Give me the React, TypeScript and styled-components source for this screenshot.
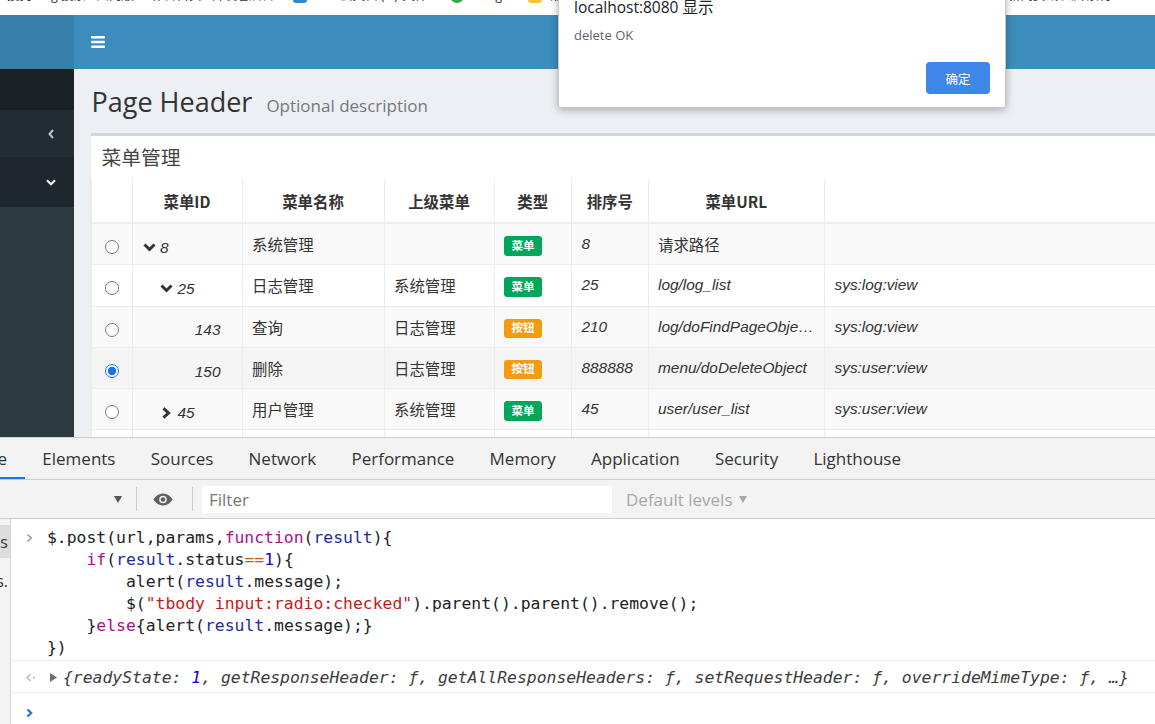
import React from "react";
import styled, { createGlobalStyle } from "styled-components";

const SANS = `"Open Sans", "Noto Sans CJK SC", sans-serif`;
const CJK = `"Noto Sans CJK SC", "Open Sans", sans-serif`;
const ARIAL = `"Liberation Sans", "Noto Sans CJK SC", sans-serif`;
const MONO = `"DejaVu Sans Mono", "Liberation Mono", monospace`;

const GlobalStyle = createGlobalStyle`
  html, body { margin: 0; padding: 0; background: #fff; }
  body { font-family: ${SANS}; }
  *, *::before, *::after { box-sizing: border-box; }
`;

const Screen = styled.div`
  position: relative;
  width: 1155px;
  height: 724px;
  overflow: hidden;
  display: flex;
  flex-direction: column;
  background: #fff;
`;

/* ---------- bookmarks bar ---------- */
const BookmarkBar = styled.div`
  flex: none;
  height: 15px;
  overflow: hidden;
  background: #fff;
  display: flex;
  align-items: flex-end;
  padding: 0 0 11px 7px;
  font: 12.5px/16px ${SANS};
  color: #333;
`;
const Bookmark = styled.div<{ $w: number }>`
  flex: none;
  width: ${(p) => p.$w}px;
  display: flex;
  align-items: center;
  gap: 7px;
  white-space: nowrap;
  overflow: hidden;
`;
const BookmarkIcon = styled.span<{ $c: string; $round?: boolean }>`
  flex: none;
  width: 14px;
  height: 14px;
  border-radius: ${(p) => (p.$round ? "50%" : "3px")};
  background: ${(p) => p.$c};
`;

/* ---------- page ---------- */
const BrowserPage = styled.div`
  flex: none;
  height: 422px;
  display: flex;
  flex-direction: column;
  overflow: hidden;
`;
const MainHeader = styled.header`
  flex: none;
  height: 54px;
  display: flex;
`;
const Logo = styled.div`
  flex: none;
  width: 74px;
  background: #367fa9;
`;
const Navbar = styled.nav`
  flex: 1;
  background: #3c8dbc;
  display: flex;
  align-items: center;
  padding-left: 17px;
`;
const ToggleButton = styled.span`
  display: flex;
  width: 14px;
  height: 12px;
  color: #fff;
`;

const Wrapper = styled.div`
  flex: 1;
  min-height: 0;
  display: flex;
`;
const Sidebar = styled.aside`
  flex: none;
  width: 74px;
  display: flex;
  flex-direction: column;
  background: #2c3b41;
`;
const SidebarHeader = styled.div`
  flex: none;
  height: 41px;
  background: #1a2226;
`;
const SidebarItem = styled.div<{ $active?: boolean; $h: number }>`
  flex: none;
  height: ${(p) => p.$h}px;
  background: ${(p) => (p.$active ? "#1e282c" : "#222d32")};
  color: ${(p) => (p.$active ? "#e8eef1" : "#b8c7ce")};
  display: flex;
  align-items: center;
  justify-content: flex-end;
  padding-right: 18px;
`;
const AngleBox = styled.span`
  display: flex;
  width: 10px;
  justify-content: center;
`;

const Content = styled.main`
  flex: 1;
  min-width: 0;
  background: #ecf0f5;
  overflow: hidden;
  display: flex;
  flex-direction: column;
`;
const ContentHeader = styled.section`
  flex: none;
  padding: 17.6px 16.5px 0 17.5px;
`;
const PageTitle = styled.h1`
  margin: 0;
  font-family: ${SANS};
  font-size: 27px;
  line-height: 29.7px;
  font-weight: 400;
  color: #333;
  white-space: nowrap;
`;
const PageDesc = styled.small`
  font-size: 17px;
  line-height: 1;
  color: #777;
  padding-left: 7px;
`;

const Box = styled.section`
  flex: none;
  margin: 16.7px 0 0 16.5px;
  width: 1534px;
  background: #fff;
  border-top: 3px solid #d2d6de;
  box-shadow: 0 1px 1px rgba(0, 0, 0, 0.1);
`;
const BoxHeader = styled.div`
  padding: 10px 11px 11px;
`;
const BoxTitle = styled.h3`
  margin: 0;
  font-family: ${CJK};
  font-size: 19.8px;
  line-height: 22px;
  font-weight: 400;
  color: #444;
`;

const Table = styled.table`
  width: 100%;
  border-collapse: collapse;
  table-layout: fixed;
  font-family: ${SANS};
  font-size: 15.4px;
  color: #333;
`;
const Col = styled.col<{ $w: number }>`
  width: ${(p) => p.$w}px;
`;
const Th = styled.th`
  height: 44.5px;
  padding: 0 9.5px;
  line-height: 20px;
  text-align: center;
  font-weight: 700;
  font-family: ${CJK};
  border: 1px solid #ededed;
  border-top: none;
  border-bottom: 2px solid #ededed;
  white-space: nowrap;
  overflow: hidden;
`;
const Tr = styled.tr<{ $bg: string }>`
  background: ${(p) => p.$bg};
`;
const Td = styled.td<{ $italic?: boolean; $center?: boolean }>`
  height: 41.3px;
  padding: 0 9.5px;
  border: 1px solid #ededed;
  line-height: 20px;
  vertical-align: middle;
  white-space: nowrap;
  overflow: hidden;
  text-overflow: ellipsis;
  text-align: ${(p) => (p.$center ? "center" : "left")};
  font-family: ${(p) => (p.$italic ? ARIAL : CJK)};
  font-style: ${(p) => (p.$italic ? "italic" : "normal")};
`;
const Radio = styled.input`
  width: 14px;
  height: 14px;
  margin: 0;
  vertical-align: middle;
  accent-color: #1a73e8;
`;
const TreeCell = styled.span`
  display: inline-flex;
  align-items: center;
  font-family: ${ARIAL};
  font-style: italic;
`;
const Indent = styled.span<{ $level: number }>`
  display: inline-block;
  width: ${(p) => p.$level * 17.4}px;
`;
const Expander = styled.span`
  display: inline-flex;
  justify-content: center;
  align-items: center;
  width: 14px;
  margin-right: 4px;
  color: #333;
`;
const Badge = styled.span<{ $kind: "menu" | "button" }>`
  display: inline-block;
  padding: 3.5px 7.5px 4.4px;
  font-family: ${CJK};
  font-size: 11.5px;
  line-height: 1;
  font-weight: 700;
  color: #fff;
  border-radius: 3.3px;
  background: ${(p) => (p.$kind === "menu" ? "#00a65a" : "#f39c12")};
  vertical-align: middle;
`;

/* ---------- alert dialog ---------- */
const AlertDialog = styled.div`
  position: absolute;
  left: 558px;
  top: -14px;
  width: 448px;
  height: 122px;
  z-index: 10;
  background: #fff;
  border: 1px solid #c9c9c9;
  border-radius: 0 0 3px 3px;
  box-shadow: 0 2px 8px rgba(0, 0, 0, 0.3);
  padding: 10px 15px 0 15px;
  display: flex;
  flex-direction: column;
`;
const AlertTitle = styled.div`
  font-family: ${SANS};
  font-size: 15.5px;
  line-height: 20px;
  color: #202124;
`;
const AlertMessage = styled.div`
  margin-top: 10px;
  font-family: ${SANS};
  font-size: 13px;
  line-height: 16px;
  color: #5f6368;
`;
const AlertActions = styled.div`
  margin-top: 19px;
  display: flex;
  justify-content: flex-end;
`;
const AlertButton = styled.button`
  width: 64px;
  height: 32px;
  border: none;
  border-radius: 4px;
  background: #3f86e9;
  color: #fff;
  font-family: ${CJK};
  font-size: 12.5px;
  padding: 0;
`;

/* ---------- devtools ---------- */
const DevTools = styled.div`
  flex: 1;
  min-height: 0;
  display: flex;
  flex-direction: column;
  border-top: 1px solid #cbcdd1;
  background: #fff;
`;
const TabBar = styled.div`
  flex: none;
  height: 42px;
  display: flex;
  background: #f3f3f3;
  border-bottom: 1px solid #cbcdd1;
  margin-left: -74px;
`;
const Tab = styled.div<{ $active?: boolean }>`
  display: flex;
  align-items: center;
  padding: 2px 17.6px 0;
  font-family: ${SANS};
  font-size: 17px;
  color: #333;
  white-space: nowrap;
  border-bottom: 2px solid ${(p) => (p.$active ? "#1a73e8" : "transparent")};
`;
const Toolbar = styled.div`
  flex: none;
  height: 39px;
  display: flex;
  align-items: center;
  padding-left: 114px;
  background: #f3f3f3;
  border-bottom: 1px solid #cbcdd1;
`;
const ToolDivider = styled.span<{ $ml: number; $mr: number }>`
  flex: none;
  width: 1px;
  height: 24px;
  background: #cccccc;
  margin: 0 ${(p) => p.$mr}px 0 ${(p) => p.$ml}px;
`;
const ToolIcon = styled.span<{ $w: number }>`
  flex: none;
  width: ${(p) => p.$w}px;
  display: flex;
  justify-content: center;
  align-items: center;
`;
const FilterInput = styled.input`
  flex: none;
  width: 410px;
  height: 27px;
  border: none;
  outline: none;
  background: #fff;
  padding: 0 7px;
  font-family: ${SANS};
  font-size: 17px;
  color: #333;
  &::placeholder {
    color: #777;
  }
`;
const LevelsSelect = styled.span`
  margin-left: 14px;
  display: flex;
  align-items: center;
  gap: 6px;
  font-family: ${SANS};
  font-size: 17px;
  color: #a8a8a8;
`;

const ConsoleArea = styled.div`
  flex: 1;
  min-height: 0;
  display: flex;
`;
const ConsoleGutter = styled.div`
  flex: none;
  width: 11px;
  background: #f3f3f3;
  border-right: 1px solid #d6d6d6;
  display: flex;
  flex-direction: column;
  padding-top: 6px;
  gap: 6px;
`;
const GutterItem = styled.div<{ $active?: boolean }>`
  height: 33px;
  display: flex;
  align-items: center;
  justify-content: flex-end;
  overflow: hidden;
  white-space: nowrap;
  padding-right: 2px;
  background: ${(p) => (p.$active ? "#dcdcdc" : "transparent")};
  font-family: ${SANS};
  font-size: 16px;
  color: #333;
`;
const Messages = styled.div`
  flex: 1;
  min-width: 0;
  display: flex;
  flex-direction: column;
`;
const Message = styled.div<{ $pt: number; $pb: number; $border?: boolean }>`
  display: flex;
  padding: ${(p) => p.$pt}px 0 ${(p) => p.$pb}px 0;
  border-bottom: ${(p) => (p.$border ? "1px solid #ececec" : "none")};
`;
const PromptSlot = styled.span`
  flex: none;
  width: 36px;
  height: 22px;
  display: flex;
  align-items: center;
  padding-left: 15px;
`;
const Code = styled.pre`
  margin: 0;
  font-family: ${MONO};
  font-size: 16.4px;
  line-height: 22px;
  color: #222;
  white-space: pre;
  display: flex;
  flex-direction: column;
`;
const OutputLine = styled.div`
  display: flex;
  align-items: center;
  font-family: ${MONO};
  font-size: 16.4px;
  line-height: 22px;
  font-style: italic;
  color: #3c3c3c;
  white-space: pre;
`;
const ExpandTriangle = styled.span`
  display: inline-flex;
  width: 13px;
  margin-left: 3px;
`;
type TokKind = "kw" | "var" | "op" | "num" | "str";
const TOK: Record<TokKind, string> = {
  kw: "#aa0d91",
  var: "#1f2a9a",
  op: "#b85c18",
  num: "#1c00cf",
  str: "#c41a16",
};
const Tok = styled.span<{ $t: TokKind }>`
  color: ${(p) => TOK[p.$t]};
`;

/* ---------- icons ---------- */
const BarsIcon = () => (
  <svg width="14" height="12" viewBox="0 0 14 12">
    <rect x="0" y="0" width="14" height="2.4" rx="1" fill="#fff" />
    <rect x="0" y="4.8" width="14" height="2.4" rx="1" fill="#fff" />
    <rect x="0" y="9.6" width="14" height="2.4" rx="1" fill="#fff" />
  </svg>
);
const AngleLeft = () => (
  <svg width="6" height="10" viewBox="0 0 6 10">
    <polyline points="5,1 1.5,5 5,9" fill="none" stroke="currentColor" strokeWidth="2" />
  </svg>
);
const AngleDown = () => (
  <svg width="10" height="7" viewBox="0 0 10 7">
    <polyline points="1,1.2 5,5.2 9,1.2" fill="none" stroke="currentColor" strokeWidth="2.2" />
  </svg>
);
const ChevronDown = () => (
  <svg width="13" height="9" viewBox="0 0 13 9">
    <polyline points="1.5,1.5 6.5,6.5 11.5,1.5" fill="none" stroke="currentColor" strokeWidth="3" />
  </svg>
);
const ChevronRight = () => (
  <svg width="9" height="12" viewBox="0 0 9 12">
    <polyline points="1.5,1.3 6.5,6 1.5,10.7" fill="none" stroke="currentColor" strokeWidth="3" />
  </svg>
);
const DropTriangle = ({ c = "#555" }: { c?: string }) => (
  <svg width="8" height="7" viewBox="0 0 8 7">
    <polygon points="0,0 8,0 4,7" fill={c} />
  </svg>
);
const EyeIcon = () => (
  <svg width="20" height="13" viewBox="0 0 20 13">
    <path d="M10 0.5C5 0.5 1.6 4.3 0.5 6.5c1.1 2.2 4.5 6 9.5 6s8.4-3.8 9.5-6C18.4 4.3 15 0.5 10 0.5z" fill="#5f5f5f" />
    <circle cx="10" cy="6.5" r="3.8" fill="#f3f3f3" />
    <circle cx="10" cy="6.5" r="2.3" fill="#5f5f5f" />
  </svg>
);
const PromptIcon = ({ c, w = 1.6 }: { c: string; w?: number }) => (
  <svg width="7" height="10" viewBox="0 0 7 10">
    <polyline points="1.5,1.5 5.2,5 1.5,8.5" fill="none" stroke={c} strokeWidth={w} />
  </svg>
);
const ResultIcon = () => (
  <svg width="10" height="9" viewBox="0 0 10 9">
    <polyline points="4.5,1 1,4.5 4.5,8" fill="none" stroke="#b4b4b4" strokeWidth="1.3" />
    <circle cx="8" cy="4.5" r="1" fill="#b4b4b4" />
  </svg>
);
const RightTriangle = () => (
  <svg width="7" height="9" viewBox="0 0 7 9">
    <polygon points="0,0 7,4.5 0,9" fill="#6e6e6e" />
  </svg>
);

/* ---------- data ---------- */
type Row = {
  id: string;
  level: number;
  expander?: "down" | "right";
  name: string;
  parent: string;
  kind: "menu" | "button";
  sort: string;
  url: string;
  urlCjk?: boolean;
  perm: string;
  bg: string;
  checked?: boolean;
};

const rows: Row[] = [
  { id: "8", level: 0, expander: "down", name: "系统管理", parent: "", kind: "menu", sort: "8", url: "请求路径", urlCjk: true, perm: "", bg: "#f9f9f9" },
  { id: "25", level: 1, expander: "down", name: "日志管理", parent: "系统管理", kind: "menu", sort: "25", url: "log/log_list", perm: "sys:log:view", bg: "#ffffff" },
  { id: "143", level: 2, name: "查询", parent: "日志管理", kind: "button", sort: "210", url: "log/doFindPageObjects", perm: "sys:log:view", bg: "#f9f9f9" },
  { id: "150", level: 2, name: "删除", parent: "日志管理", kind: "button", sort: "888888", url: "menu/doDeleteObject", perm: "sys:user:view", bg: "#f5f5f5", checked: true },
  { id: "45", level: 1, expander: "right", name: "用户管理", parent: "系统管理", kind: "menu", sort: "45", url: "user/user_list", perm: "sys:user:view", bg: "#f9f9f9" },
  { id: "46", level: 1, expander: "right", name: "角色管理", parent: "系统管理", kind: "menu", sort: "46", url: "role/role_list", perm: "sys:role:view", bg: "#ffffff" },
];

const colWidths = [41, 110, 142, 110, 77.5, 76.5, 176.5, 800];
const headers = ["", "菜单ID", "菜单名称", "上级菜单", "类型", "排序号", "菜单URL", "授权标识"];
const tabs = ["Console", "Elements", "Sources", "Network", "Performance", "Memory", "Application", "Security", "Lighthouse"];

export default function App() {
  return (
    <>
      <GlobalStyle />
      <Screen>
        <BookmarkBar>
          <Bookmark $w={132}>搜狗Bing 搜索 - 国内版 ...</Bookmark>
          <Bookmark $w={154}>工作台首页 - 开发者后台...</Bookmark>
          <Bookmark $w={157}>
            <BookmarkIcon $c="#2a8ad8" />
            WPS云文档 (...)/文件...
          </Bookmark>
          <Bookmark $w={78}>
            <BookmarkIcon $c="#34a853" $round />
            Google
          </Bookmark>
          <Bookmark $w={480}>
            <BookmarkIcon $c="#f5c342" />
            常用网站
          </Bookmark>
          <Bookmark $w={150}>新闻资讯 图片素材</Bookmark>
        </BookmarkBar>

        <BrowserPage>
          <MainHeader>
            <Logo />
            <Navbar>
              <ToggleButton>
                <BarsIcon />
              </ToggleButton>
            </Navbar>
          </MainHeader>
          <Wrapper>
            <Sidebar>
              <SidebarHeader />
              <SidebarItem $h={47}>
                <AngleBox>
                  <AngleLeft />
                </AngleBox>
              </SidebarItem>
              <SidebarItem $h={50} $active>
                <AngleBox>
                  <AngleDown />
                </AngleBox>
              </SidebarItem>
            </Sidebar>
            <Content>
              <ContentHeader>
                <PageTitle>
                  Page Header <PageDesc>Optional description</PageDesc>
                </PageTitle>
              </ContentHeader>
              <Box>
                <BoxHeader>
                  <BoxTitle>菜单管理</BoxTitle>
                </BoxHeader>
                <Table>
                  <colgroup>
                    {colWidths.map((w, i) => (
                      <Col key={i} $w={w} />
                    ))}
                  </colgroup>
                  <thead>
                    <tr>
                      {headers.map((h, i) => (
                        <Th key={i}>{h}</Th>
                      ))}
                    </tr>
                  </thead>
                  <tbody>
                    {rows.map((r) => (
                      <Tr key={r.id} $bg={r.bg}>
                        <Td $center>
                          <Radio type="radio" name="menu" checked={!!r.checked} readOnly />
                        </Td>
                        <Td>
                          <TreeCell>
                            <Indent $level={r.level} />
                            <Expander>
                              {r.expander === "down" && <ChevronDown />}
                              {r.expander === "right" && <ChevronRight />}
                            </Expander>
                            {r.id}
                          </TreeCell>
                        </Td>
                        <Td>{r.name}</Td>
                        <Td>{r.parent}</Td>
                        <Td>
                          <Badge $kind={r.kind}>{r.kind === "menu" ? "菜单" : "按钮"}</Badge>
                        </Td>
                        <Td $italic>{r.sort}</Td>
                        <Td $italic={!r.urlCjk}>{r.url}</Td>
                        <Td $italic>{r.perm}</Td>
                      </Tr>
                    ))}
                  </tbody>
                </Table>
              </Box>
            </Content>
          </Wrapper>
        </BrowserPage>

        <DevTools>
          <TabBar>
            {tabs.map((t) => (
              <Tab key={t} $active={t === "Console"}>
                {t}
              </Tab>
            ))}
          </TabBar>
          <Toolbar>
            <ToolIcon $w={8}>
              <DropTriangle />
            </ToolIcon>
            <ToolDivider $ml={14} $mr={13} />
            <ToolIcon $w={26}>
              <EyeIcon />
            </ToolIcon>
            <ToolDivider $ml={16} $mr={9} />
            <FilterInput placeholder="Filter" readOnly />
            <LevelsSelect>
              Default levels
              <DropTriangle c="#a8a8a8" />
            </LevelsSelect>
          </Toolbar>
          <ConsoleArea>
            <ConsoleGutter>
              <GutterItem $active>6 messages</GutterItem>
              <GutterItem>No user messages.</GutterItem>
            </ConsoleGutter>
            <Messages>
              <Message $pt={8} $pb={1} $border>
                <PromptSlot>
                  <PromptIcon c="#9a9a9a" />
                </PromptSlot>
                <Code>
                  <span>
                    $.post(url,params,<Tok $t="kw">function</Tok>(<Tok $t="var">result</Tok>){"{"}
                  </span>
                  <span>
                    {"    "}
                    <Tok $t="kw">if</Tok>(<Tok $t="var">result</Tok>.status<Tok $t="op">==</Tok>
                    <Tok $t="num">1</Tok>){"{"}
                  </span>
                  <span>
                    {"        "}alert(<Tok $t="var">result</Tok>.message);
                  </span>
                  <span>
                    {"        "}$(<Tok $t="str">"tbody input:radio:checked"</Tok>).parent().parent().remove();
                  </span>
                  <span>
                    {"    }"}
                    <Tok $t="kw">else</Tok>
                    {"{"}alert(<Tok $t="var">result</Tok>.message);{"}"}
                  </span>
                  <span>{"})"}</span>
                </Code>
              </Message>
              <Message $pt={5.7} $pb={3} $border>
                <PromptSlot>
                  <ResultIcon />
                </PromptSlot>
                <OutputLine>
                  <ExpandTriangle>
                    <RightTriangle />
                  </ExpandTriangle>
                  {"{readyState: "}
                  <Tok $t="num">1</Tok>
                  {", getResponseHeader: ƒ, getAllResponseHeaders: ƒ, setRequestHeader: ƒ, overrideMimeType: ƒ, …}"}
                </OutputLine>
              </Message>
              <Message $pt={9} $pb={0}>
                <PromptSlot>
                  <PromptIcon c="#2a6fe0" w={2.2} />
                </PromptSlot>
              </Message>
            </Messages>
          </ConsoleArea>
        </DevTools>

        <AlertDialog>
          <AlertTitle>localhost:8080 显示</AlertTitle>
          <AlertMessage>delete OK</AlertMessage>
          <AlertActions>
            <AlertButton>确定</AlertButton>
          </AlertActions>
        </AlertDialog>
      </Screen>
    </>
  );
}
